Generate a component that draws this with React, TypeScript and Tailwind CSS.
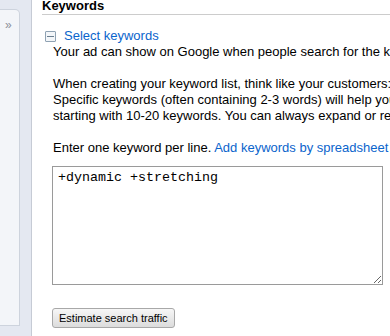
import React from 'react';

const Sidebar = () => (
  <div className="w-[32px] shrink-0 h-[336px] bg-[#e4e8f1] border-r border-[#c6cbd5] pt-[9px] pb-[10px]">
    <div className="w-[20px] h-full bg-[#f3f5f9] border-t border-r border-b border-[#cdd3dd] rounded-tr-[5px] pt-[8px]">
      <div className="text-[12px] leading-[14px] text-[#8b909a] pl-[5px]">»</div>
    </div>
  </div>
);

const CollapseIcon = () => (
  <span className="inline-flex items-center justify-center w-[11px] h-[11px] border border-[#8fa2b3] bg-[#f3f6f9] rounded-[1px]">
    <span className="block w-[7px] h-[1px] bg-[#6b7f90]" />
  </span>
);

export default function App() {
  return (
    <div className="flex w-[390px] h-[336px] overflow-hidden bg-white" style={{ fontFamily: '"Liberation Sans", Arial, sans-serif' }}>
      <Sidebar />
      <div className="flex-1 pl-[10px] overflow-hidden">
        {/* header */}
        <div className="-mt-[2px] text-[13px] font-bold leading-[16px] text-black border-b border-[#cccccc]">Keywords</div>

        {/* section */}
        <div className="mt-[13px] flex items-center h-[16px] pl-[3px]">
          <CollapseIcon />
          <a href="#" className="ml-[8px] text-[13px] leading-[16px] text-[#0a64cc]">Select keywords</a>
        </div>

        <div className="pl-[11px] text-[13px] leading-[16px] text-black whitespace-nowrap">
          <p>Your ad can show on Google when people search for the keywords you choose here.</p>
          <p className="mt-[16px]">When creating your keyword list, think like your customers: what would they search for?</p>
          <p>Specific keywords (often containing 2-3 words) will help you show your ad to the right people.</p>
          <p>starting with 10-20 keywords. You can always expand or refine your list later.</p>
          <p className="mt-[16px]">
            Enter one keyword per line. <a href="#" className="text-[#0a64cc]">Add keywords by spreadsheet</a>
          </p>

          <textarea
            defaultValue="+dynamic +stretching"
            className="block mt-[10px] -ml-[1px] w-[331px] h-[119px] border border-[#9a9a9a] px-[5px] pt-[3px] text-[13.33px] leading-[16px] text-black outline-none"
            style={{ fontFamily: '"Liberation Mono", "Courier New", monospace' }}
          />

          <button className="mt-[23px] -ml-[1px] h-[20px] px-[6px] border border-[#a8a8a8] rounded-[3px] bg-gradient-to-b from-[#f7f7f7] to-[#dcdcdc] text-[11px] leading-[16px] text-black">
            Estimate search traffic
          </button>
        </div>
      </div>
    </div>
  );
}
